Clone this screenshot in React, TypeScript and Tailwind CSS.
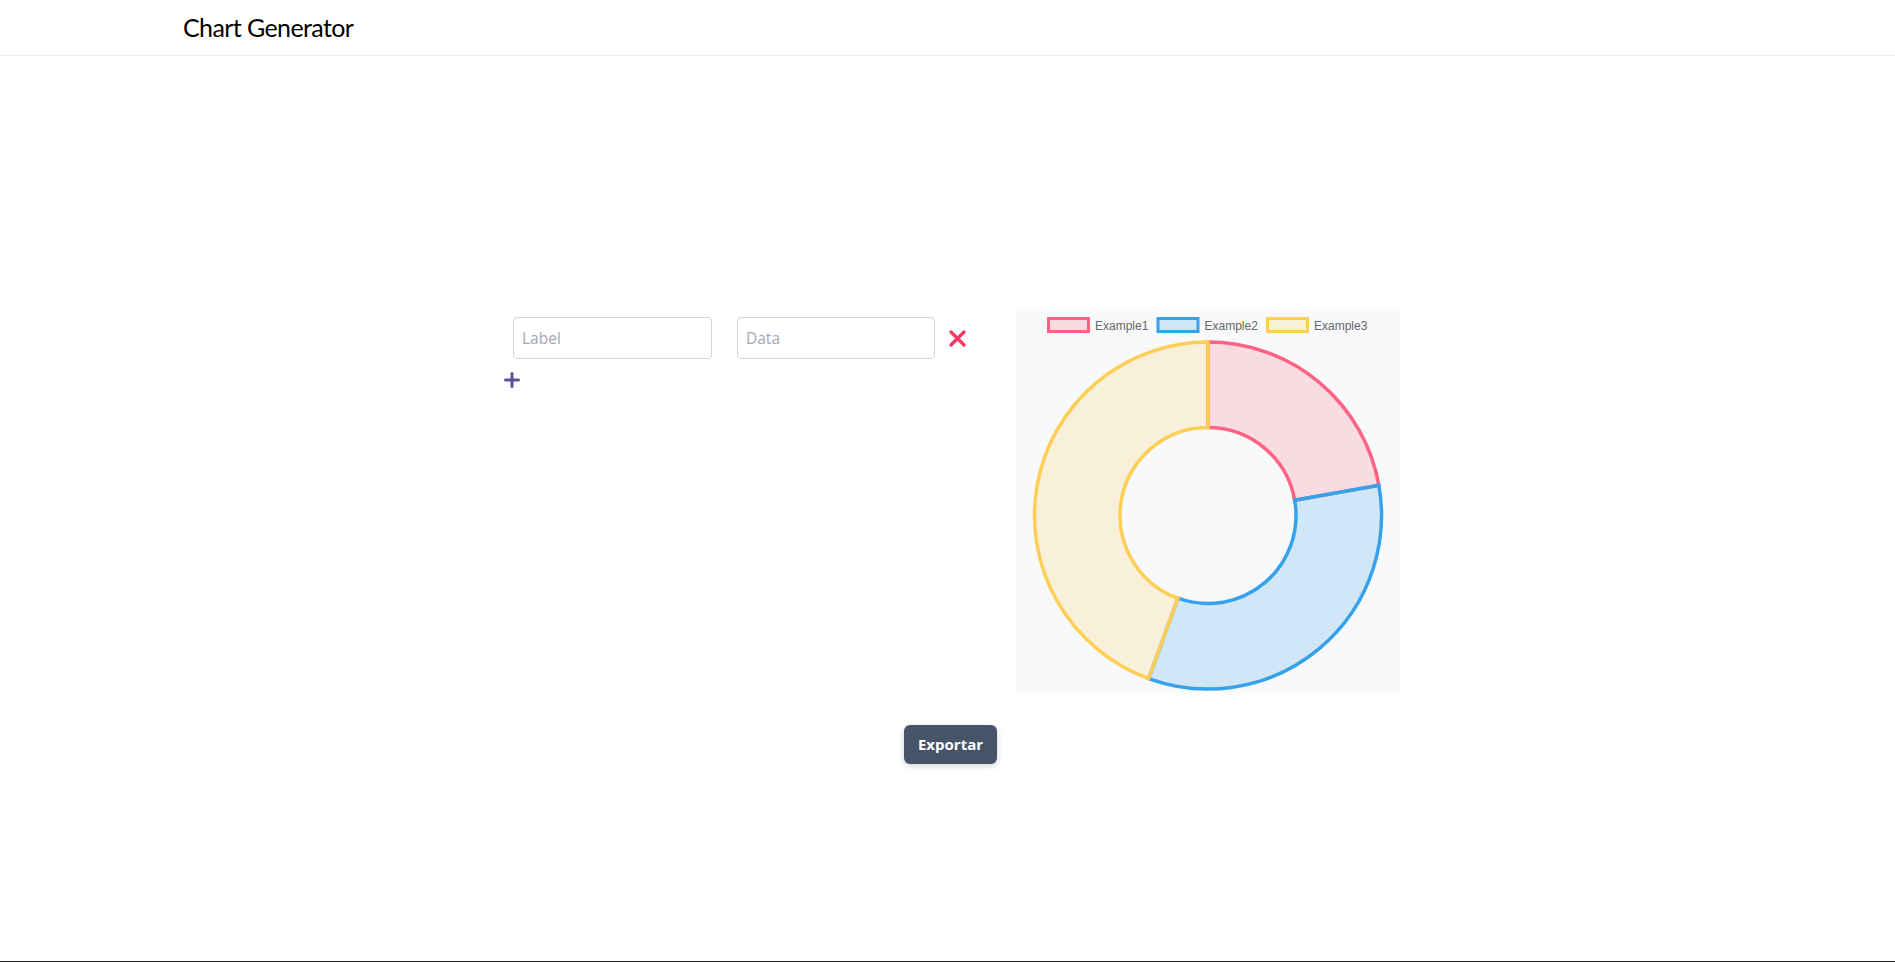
import React from "react";

const CX = 192;
const CY = 206.5;
const R = 173.5;
const RI = 88;

function arcPath(a0: number, a1: number) {
  const rad = (d: number) => (d * Math.PI) / 180;
  const p = (r: number, a: number) => [CX + r * Math.cos(rad(a)), CY + r * Math.sin(rad(a))];
  const large = a1 - a0 > 180 ? 1 : 0;
  const [x0, y0] = p(R, a0);
  const [x1, y1] = p(R, a1);
  const [x2, y2] = p(RI, a1);
  const [x3, y3] = p(RI, a0);
  return `M${x0} ${y0} A${R} ${R} 0 ${large} 1 ${x1} ${y1} L${x2} ${y2} A${RI} ${RI} 0 ${large} 0 ${x3} ${y3} Z`;
}

const data = [
  { label: "Example1", value: 20, stroke: "rgb(255,99,132)", fill: "rgba(255,99,132,0.2)", box: 32.5, text: 79 },
  { label: "Example2", value: 30, stroke: "rgb(54,162,235)", fill: "rgba(54,162,235,0.2)", box: 142, text: 188.5 },
  { label: "Example3", value: 40, stroke: "rgb(255,206,86)", fill: "rgba(255,206,86,0.2)", box: 251.5, text: 298 },
];

function Donut() {
  const total = data.reduce((s, d) => s + d.value, 0);
  let a = -90;
  const arcs = data.map((d) => {
    const a0 = a;
    const a1 = a + (d.value / total) * 360;
    a = a1;
    return { ...d, path: arcPath(a0, a1) };
  });
  return (
    <svg width="384" height="384" viewBox="0 0 384 384" className="block">
      {data.map((d) => (
        <g key={d.label}>
          <rect x={d.box} y={9.5} width={40} height={13} fill={d.fill} stroke={d.stroke} strokeWidth={3} />
          <text x={d.text} y={20.5} fontSize={12} fill="#666" fontFamily='"Liberation Sans", Arial, sans-serif'>
            {d.label}
          </text>
        </g>
      ))}
      {arcs.map((d) => (
        <path key={d.label} d={d.path} fill={d.fill} stroke={d.stroke} strokeWidth={3.5} />
      ))}
    </svg>
  );
}

export default function App() {
  return (
    <div className="h-[962px] w-full flex flex-col bg-white" style={{ fontFamily: '"Open Sans", "Noto Sans", sans-serif' }}>
      <header className="h-14 shrink-0 border-b border-[#ececec] flex items-center pl-[183px]">
        <span className="text-[25px] text-black leading-none tracking-[-0.6px] pb-[1px]" style={{ fontFamily: 'Lato, "Open Sans", sans-serif' }}>
          Chart Generator
        </span>
      </header>
      <main className="flex-1 flex flex-col items-center pt-[253px]">
        <div className="w-[905px] pl-[9px] flex">
          <div className="flex-1 flex flex-col pt-2">
            <div className="flex items-center pl-[9px]">
              <input
                placeholder="Label"
                className="w-[199px] h-[42px] border border-[#d2d2da] rounded-[4px] px-[8px] text-[15.5px] text-gray-800 placeholder:text-[#a3a8b8] outline-none"
              />
              <input
                placeholder="Data"
                className="ml-[25px] w-[198px] h-[42px] border border-[#d2d2da] rounded-[4px] px-[8px] text-[15.5px] text-gray-800 placeholder:text-[#a3a8b8] outline-none"
              />
              <button className="ml-[14px] w-[17px] h-[17px] flex items-center justify-center">
                <svg width="17" height="17" viewBox="0 0 17 17">
                  <path d="M2 2 L15 15 M15 2 L2 15" stroke="#f43a62" strokeWidth="3.2" strokeLinecap="round" />
                </svg>
              </button>
            </div>
            <button className="mt-[13px] w-4 h-4 flex items-center justify-center">
              <svg width="16" height="16" viewBox="0 0 16 16">
                <path d="M8 1.5 V14.5 M1.5 8 H14.5" stroke="#5b4f9b" strokeWidth="3" strokeLinecap="round" />
              </svg>
            </button>
          </div>
          <div className="w-[384px] h-[384px] bg-[#f8f9fa] shrink-0">
            <Donut />
          </div>
        </div>
        <div className="mt-8 pl-[6px]">
          <button className="w-[93px] h-[39px] rounded-[6px] bg-[#475467] text-white text-[15px] font-bold shadow-[0_2px_6px_rgba(0,0,0,0.18)]">
            Exportar
          </button>
        </div>
      </main>
      <div className="h-px bg-[#262626] shrink-0" />
    </div>
  );
}
